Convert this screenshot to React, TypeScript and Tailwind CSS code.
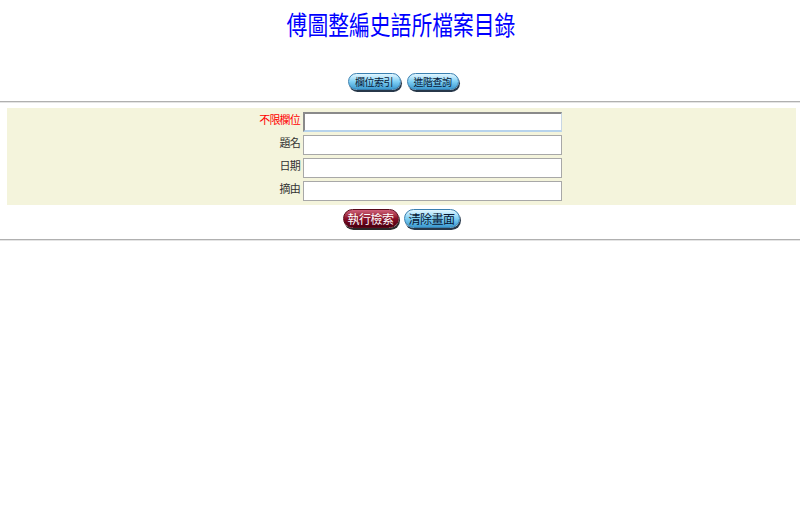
import React from "react";

const font = { fontFamily: '"Noto Sans CJK TC", "Noto Sans CJK SC", sans-serif' };

function BlueBtn({ label, w, h, size }: { label: string; w: string; h: string; size: string }) {
  return (
    <button
      className={`${w} ${h} ${size} rounded-full bg-linear-to-b from-[#e2f6ff] via-[#80d0f4] to-[#3b9ad0] text-[#061634] shadow-[1px_2px_0_#27384a] border border-[#3a80b0] leading-none flex items-center justify-center tracking-[-0.5px]`}
    >
      {label}
    </button>
  );
}

export default function App() {
  const rows = [
    { label: "不限欄位", red: true },
    { label: "題名" },
    { label: "日期" },
    { label: "摘由" },
  ];
  return (
    <div className="w-[800px] h-[530px] bg-white" style={font}>
      <div className="h-[48px] flex items-center justify-center">
        <span className="inline-block text-[26px] leading-none text-[#0000ff] scale-x-[0.8] ml-[2px]">
          傅圖整編史語所檔案目錄
        </span>
      </div>
      <div className="mt-[25px] h-[18px] flex justify-center gap-[6px] pl-[6px]">
        <BlueBtn label="欄位索引" w="w-[53px]" h="h-[17px]" size="text-[10px]" />
        <BlueBtn label="進階查詢" w="w-[52px]" h="h-[17px]" size="text-[10px]" />
      </div>
      <div className="mt-[10px] border-t border-b border-t-[#b0b0b0] border-b-[#e4e4e4]" />
      <div className="mt-[5px] mx-[7px] w-[789px] h-[97px] bg-[#f4f4dc] pt-[4px] flex flex-col gap-[3px] items-center">
        {rows.map((r, i) => (
          <div key={r.label} className="flex items-start gap-[3px] h-[20px]">
            <div
              className={`w-[59px] text-right text-[11px] leading-[14px] tracking-[-0.8px] ${r.red ? "text-[#ff0000]" : "text-[#333333]"}`}
            >
              {r.label}
            </div>
            <input
              className={`w-[259px] h-[20px] bg-white outline-none ${
                i === 0
                  ? "border-t-2 border-l-2 border-r border-b-2 border-t-[#8a8a8a] border-l-[#8a8a8a] border-r-[#c8d6e4] border-b-[#b7d3ec]"
                  : "border border-[#a8a8a8]"
              }`}
            />
          </div>
        ))}
      </div>
      <div className="mt-[4px] h-[20px] flex justify-center gap-[5px] pl-[2px]">
        <button className="w-[56px] h-[19px] text-[12px] rounded-full bg-linear-to-b from-[#d0607a] via-[#8a1028] to-[#4a0010] text-white shadow-[1px_2px_0_#2a2a2a] border border-[#5a0a1a] leading-none flex items-center justify-center tracking-[-0.5px]">
          執行檢索
        </button>
        <BlueBtn label="清除畫面" w="w-[56px]" h="h-[19px]" size="text-[12px]" />
      </div>
      <div className="mt-[10px] border-t border-b border-t-[#b0b0b0] border-b-[#e4e4e4]" />
    </div>
  );
}
